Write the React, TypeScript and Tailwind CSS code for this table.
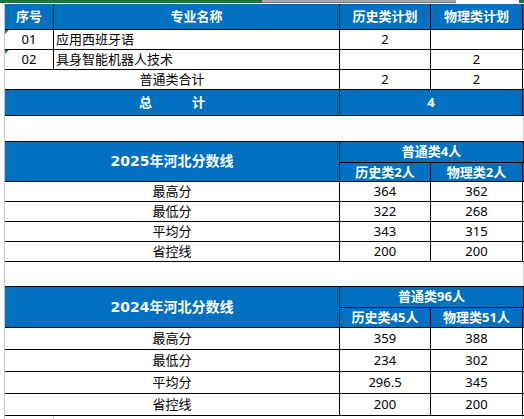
import React from 'react';

const base = "font-['Noto_Sans','Noto_Sans_CJK_SC',sans-serif] text-[13px]";
const head = "font-['Noto_Sans','Noto_Sans_CJK_SC',sans-serif] text-[13px] font-bold text-white";
const big = "font-['DejaVu_Sans','Noto_Sans_CJK_SC',sans-serif] text-[14px] font-bold text-white";

const Flag: React.FC = () => (
  <span className="absolute left-0 top-0 w-0 h-0 border-t-[4px] border-r-[4px] border-t-[#1f8a3c] border-r-transparent" />
);

interface ScoreRow {
  label: string;
  hist: string;
  phys: string;
}

interface ScoreTableProps {
  title: string;
  total: string;
  hist: string;
  phys: string;
  rows: ScoreRow[];
  headH: string;
  rowH: string;
}

const ScoreTable: React.FC<ScoreTableProps> = ({ title, total, hist, phys, rows, headH, rowH }) => (
  <div className="flex flex-col">
    <div className={`flex ${headH} bg-[#0070c0] border-y border-black`}>
      <div className={`w-[335px] border-r border-black flex items-center justify-center ${big}`}>{title}</div>
      <div className="w-[184px] flex flex-col">
        <div className={`h-[21px] border-b border-black border-r flex items-center justify-center ${head}`}>{total}</div>
        <div className="flex-1 flex">
          <div className={`w-[91px] border-r border-black flex items-center justify-center ${head}`}>{hist}</div>
          <div className={`w-[92px] border-r border-black flex items-center justify-center ${head}`}>{phys}</div>
        </div>
      </div>
    </div>
    {rows.map((r) => (
      <div key={r.label} className={`flex ${rowH} border-b border-black ${base} text-black`}>
        <div className="w-[335px] border-r border-black flex items-center justify-center">{r.label}</div>
        <div className="w-[91px] border-r border-black flex items-center justify-center">{r.hist}</div>
        <div className="w-[92px] border-r border-black flex items-center justify-center">{r.phys}</div>
      </div>
    ))}
  </div>
);

export default function App() {
  return (
    <div className="w-[524px] h-[419px] bg-white overflow-hidden flex flex-col">
      {/* sheet top edge */}
      <div className="flex h-[3px] shrink-0">
        <div className="w-[262px] bg-[#21703f]" />
        <div className="w-[194px] bg-[#a9a9a9] border-b border-[#7a7a7a]" />
        <div className="w-[63px] bg-white" />
        <div className="flex-1 bg-[#21703f]" />
      </div>
      <div className="h-[1px] shrink-0" />

      <div className="flex flex-1">
        {/* row gutter */}
        <div className="w-[4px] shrink-0" />
        <div className="w-px shrink-0 bg-[#c6c6c6]" />

        <div className="w-[519px] flex flex-col">
          {/* plan table */}
          <div className="flex h-[26px] bg-[#0070c0] border-b border-black">
            <div className={`w-[49px] border-r border-black flex items-center justify-center ${head}`}>序号</div>
            <div className={`w-[286px] border-r border-black flex items-center justify-center ${head}`}>专业名称</div>
            <div className={`w-[91px] border-r border-black flex items-center justify-center ${head}`}>历史类计划</div>
            <div className={`w-[92px] border-r border-black flex items-center justify-center ${head}`}>物理类计划</div>
          </div>
          <div className={`flex h-[20px] border-b border-black ${base} text-black`}>
            <div className="relative w-[49px] border-r border-black flex items-center justify-center">
              <Flag />01
            </div>
            <div className="w-[286px] border-r border-black flex items-center pl-[2px]">应用西班牙语</div>
            <div className="w-[91px] border-r border-black flex items-center justify-center">2</div>
            <div className="w-[92px] border-r border-black" />
          </div>
          <div className={`flex h-[20px] border-b border-black ${base} text-black`}>
            <div className="relative w-[49px] border-r border-black flex items-center justify-center">
              <Flag />02
            </div>
            <div className="w-[286px] border-r border-black flex items-center pl-[2px]">具身智能机器人技术</div>
            <div className="w-[91px] border-r border-black" />
            <div className="w-[92px] border-r border-black flex items-center justify-center">2</div>
          </div>
          <div className={`flex h-[20px] border-b border-black ${base} text-black`}>
            <div className="w-[335px] border-r border-black flex items-center justify-center">普通类合计</div>
            <div className="w-[91px] border-r border-black flex items-center justify-center">2</div>
            <div className="w-[92px] border-r border-black flex items-center justify-center">2</div>
          </div>
          <div className="flex h-[26px] bg-[#0070c0] border-b border-black">
            <div className={`w-[335px] border-r border-black flex items-center justify-center gap-[40px] ${head}`}>
              <span>总</span>
              <span>计</span>
            </div>
            <div className={`w-[183px] border-r border-black flex items-center justify-center ${head}`}>4</div>
          </div>

          <div className="h-[25px] border-r border-[#d0d0d0]" />

          <ScoreTable
            title="2025年河北分数线"
            total="普通类4人"
            hist="历史类2人"
            phys="物理类2人"
            headH="h-[41px]"
            rowH="h-[20px]"
            rows={[
              { label: '最高分', hist: '364', phys: '362' },
              { label: '最低分', hist: '322', phys: '268' },
              { label: '平均分', hist: '343', phys: '315' },
              { label: '省控线', hist: '200', phys: '200' },
            ]}
          />

          <div className="h-[24px] border-r border-[#d0d0d0]" />

          <ScoreTable
            title="2024年河北分数线"
            total="普通类96人"
            hist="历史类45人"
            phys="物理类51人"
            headH="h-[42px]"
            rowH="h-[22px]"
            rows={[
              { label: '最高分', hist: '359', phys: '388' },
              { label: '最低分', hist: '234', phys: '302' },
              { label: '平均分', hist: '296.5', phys: '345' },
              { label: '省控线', hist: '200', phys: '200' },
            ]}
          />

          <div className="flex flex-1">
            <div className="w-[49px] border-r border-[#d0d0d0]" />
            <div className="w-[469px] border-r border-[#d0d0d0]" />
          </div>
        </div>
      </div>
    </div>
  );
}
